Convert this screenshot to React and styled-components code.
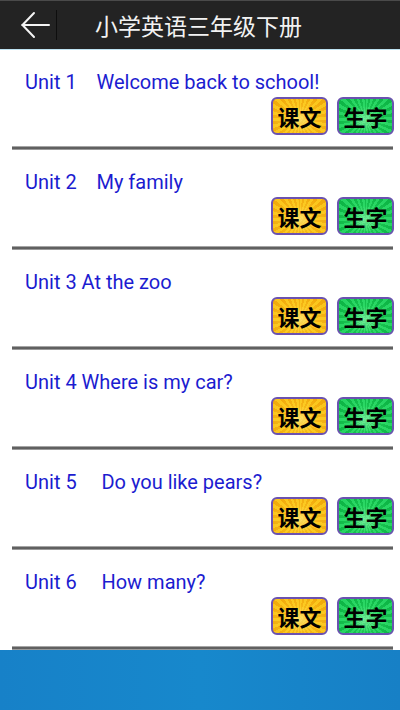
import React from 'react';
import styled, { createGlobalStyle } from 'styled-components';

const GlobalStyle = createGlobalStyle`
  html, body {
    margin: 0;
    padding: 0;
    background: #fff;
  }
`;

const Screen = styled.div`
  width: 400px;
  height: 710px;
  overflow: hidden;
  display: flex;
  flex-direction: column;
  background: #fff;
  font-family: Roboto, "Noto Sans CJK SC", sans-serif;
`;

const Header = styled.div`
  height: 48px;
  flex-shrink: 0;
  display: flex;
  align-items: center;
  background: #232323;
  border-top: 1px solid #4a4a4a;
  border-bottom: 1px solid #bfe3f2;
`;

const BackButton = styled.div`
  width: 57px;
  height: 30px;
  display: flex;
  align-items: center;
  box-sizing: border-box;
  padding-left: 21px;
  border-right: 1px solid #0e0e0e;
`;

const Title = styled.div`
  margin-left: 38px;
  color: #f2f2f2;
  font-family: "Noto Sans CJK SC", sans-serif;
  font-size: 23px;
  line-height: 30px;
`;

const List = styled.div`
  flex: 1;
  display: flex;
  flex-direction: column;
`;

const Row = styled.div`
  height: 100px;
  flex-shrink: 0;
  display: flex;
  flex-direction: column;
  box-sizing: border-box;
  padding-top: 20px;
`;

const UnitTitle = styled.div`
  padding-left: 25px;
  color: #1c1cd0;
  font-size: 20px;
  line-height: 24px;
  white-space: pre;
`;

const Actions = styled.div`
  display: flex;
  justify-content: flex-end;
  gap: 9px;
  padding-right: 6px;
  margin-top: 3px;
`;

const rays = {
  yellow: `radial-gradient(ellipse at 50% 60%, rgba(255,236,130,0.75) 0%, rgba(255,220,60,0.25) 45%, rgba(240,160,0,0) 80%),
    repeating-conic-gradient(from 0deg at 50% 60%, #fbc61c 0deg 7deg, #f2ab0c 7deg 14deg)`,
  green: `radial-gradient(ellipse at 50% 60%, rgba(160,255,190,0.65) 0%, rgba(60,230,110,0.25) 45%, rgba(0,170,60,0) 80%),
    repeating-conic-gradient(from 0deg at 50% 60%, #26d462 0deg 7deg, #0eb646 7deg 14deg)`,
};

const Tile = styled.div`
  width: 57px;
  height: 38px;
  box-sizing: border-box;
  border: 2px solid #6b52b0;
  border-radius: 6px;
  background: ${(p) => rays[p.$tone]};
  display: flex;
  align-items: center;
  justify-content: center;
  color: #000;
  font-family: "Noto Sans CJK SC", sans-serif;
  font-weight: 700;
  font-size: 22px;
`;

const Divider = styled.div`
  margin: auto 7px 0 12px;
  height: 4px;
  background: linear-gradient(#c8c8c8, #5a5a5a 40%, #5a5a5a 60%, #b8b8b8);
`;

const Footer = styled.div`
  height: 60px;
  flex-shrink: 0;
  background: linear-gradient(90deg, #1781c8, #1788cc 50%, #1780c6);
`;

const units = [
  'Unit 1    Welcome back to school!',
  'Unit 2    My family',
  'Unit 3 At the zoo',
  'Unit 4 Where is my car?',
  'Unit 5     Do you like pears?',
  'Unit 6     How many?',
];

const ArrowIcon = () => (
  <svg width="29" height="28" viewBox="0 0 29 28" fill="none" stroke="#f4f4f4" strokeWidth="2" strokeLinecap="round">
    <line x1="1.5" y1="14" x2="28" y2="14" />
    <line x1="1.5" y1="14" x2="13" y2="2" />
    <line x1="1.5" y1="14" x2="13" y2="26" />
  </svg>
);

export default function App() {
  return (
    <Screen>
      <GlobalStyle />
      <Header>
        <BackButton>
          <ArrowIcon />
        </BackButton>
        <Title>小学英语三年级下册</Title>
      </Header>
      <List>
        {units.map((u) => (
          <Row key={u}>
            <UnitTitle>{u}</UnitTitle>
            <Actions>
              <Tile $tone="yellow">课文</Tile>
              <Tile $tone="green">生字</Tile>
            </Actions>
            <Divider />
          </Row>
        ))}
      </List>
      <Footer />
    </Screen>
  );
}
